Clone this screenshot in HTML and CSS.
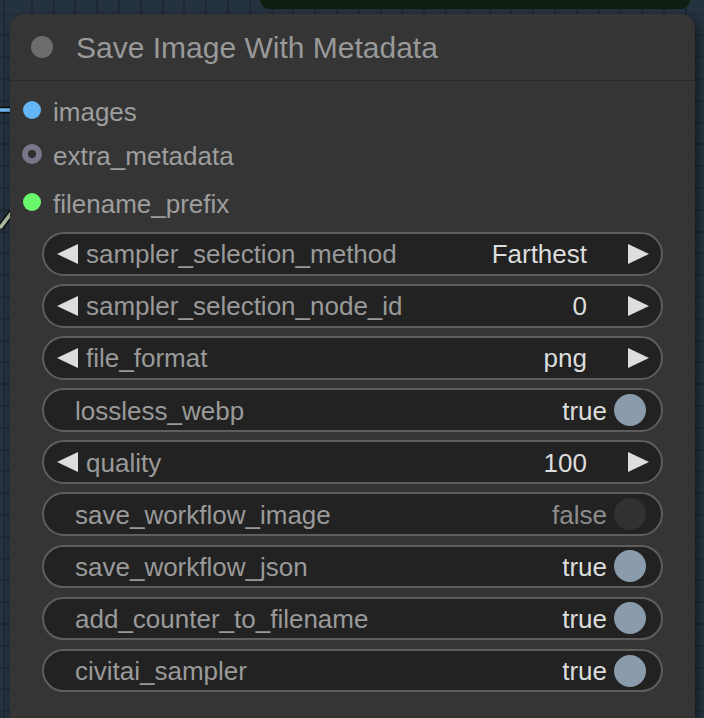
FILE: index.html
```html
<!DOCTYPE html>
<html>
<head>
<meta charset="utf-8">
<link rel="stylesheet" href="styles.css">
</head>
<body>
<div class="canvas">
  <svg class="links" width="12" height="240" viewBox="0 0 12 240">
    <line x1="0" y1="110" x2="12" y2="110" stroke="#111" stroke-width="7"/>
    <line x1="0" y1="110" x2="12" y2="110" stroke="#6cb8f4" stroke-width="3.5"/>
    <line x1="0" y1="228" x2="12" y2="212" stroke="#111" stroke-width="7"/>
    <line x1="0" y1="228" x2="12" y2="212" stroke="#a9b9a3" stroke-width="3.5"/>
  </svg>
  <div class="other-node"></div>
  <div class="node">
    <div class="title">
      <span class="title-dot"></span>
      <span class="title-text">Save Image With Metadata</span>
    </div>
    <div class="slots">
      <div class="slot"><span class="slot-pin"><span class="pin pin-blue"></span></span><span class="slot-label">images</span></div>
      <div class="slot"><span class="slot-pin"><span class="pin pin-ring"></span></span><span class="slot-label">extra_metadata</span></div>
      <div class="slot slot-last"><span class="slot-pin"><span class="pin pin-green"></span></span><span class="slot-label">filename_prefix</span></div>
    </div>
    <div class="widgets">
      <div class="widget">
        <svg class="arrow" width="21" height="20" viewBox="0 0 21 20"><polygon points="21,0 21,20 0,10" fill="#ddd"/></svg>
        <span class="w-label">sampler_selection_method</span>
        <span class="w-value">Farthest</span>
        <svg class="arrow arrow-r" width="21" height="20" viewBox="0 0 21 20"><polygon points="0,0 0,20 21,10" fill="#ddd"/></svg>
      </div>
      <div class="widget">
        <svg class="arrow" width="21" height="20" viewBox="0 0 21 20"><polygon points="21,0 21,20 0,10" fill="#ddd"/></svg>
        <span class="w-label">sampler_selection_node_id</span>
        <span class="w-value">0</span>
        <svg class="arrow arrow-r" width="21" height="20" viewBox="0 0 21 20"><polygon points="0,0 0,20 21,10" fill="#ddd"/></svg>
      </div>
      <div class="widget">
        <svg class="arrow" width="21" height="20" viewBox="0 0 21 20"><polygon points="21,0 21,20 0,10" fill="#ddd"/></svg>
        <span class="w-label">file_format</span>
        <span class="w-value">png</span>
        <svg class="arrow arrow-r" width="21" height="20" viewBox="0 0 21 20"><polygon points="0,0 0,20 21,10" fill="#ddd"/></svg>
      </div>
      <div class="widget toggle">
        <span class="w-label">lossless_webp</span>
        <span class="w-value">true</span>
        <span class="knob on"></span>
      </div>
      <div class="widget">
        <svg class="arrow" width="21" height="20" viewBox="0 0 21 20"><polygon points="21,0 21,20 0,10" fill="#ddd"/></svg>
        <span class="w-label">quality</span>
        <span class="w-value">100</span>
        <svg class="arrow arrow-r" width="21" height="20" viewBox="0 0 21 20"><polygon points="0,0 0,20 21,10" fill="#ddd"/></svg>
      </div>
      <div class="widget toggle">
        <span class="w-label">save_workflow_image</span>
        <span class="w-value off">false</span>
        <span class="knob"></span>
      </div>
      <div class="widget toggle">
        <span class="w-label">save_workflow_json</span>
        <span class="w-value">true</span>
        <span class="knob on"></span>
      </div>
      <div class="widget toggle">
        <span class="w-label">add_counter_to_filename</span>
        <span class="w-value">true</span>
        <span class="knob on"></span>
      </div>
      <div class="widget toggle">
        <span class="w-label">civitai_sampler</span>
        <span class="w-value">true</span>
        <span class="knob on"></span>
      </div>
    </div>
  </div>
</div>
</body>
</html>
```

FILE: styles.css
```css
html, body {
  margin: 0;
  padding: 0;
}
body {
  width: 704px;
  height: 718px;
  overflow: hidden;
  font-family: "Liberation Sans", Arial, sans-serif;
}
.canvas {
  position: relative;
  width: 704px;
  height: 718px;
  overflow: hidden;
  background-color: #25323f;
  background-image:
    repeating-linear-gradient(0deg, transparent 0px, transparent 19.8px, #1e2934 19.8px, #1e2934 21.8px),
    repeating-linear-gradient(90deg, transparent 0px, transparent 19.8px, #1e2934 19.8px, #1e2934 21.8px);
  background-position: 0 14px, 11px 0;
}
.links {
  position: absolute;
  left: 0;
  top: 0;
}
.other-node {
  position: absolute;
  left: 260px;
  top: -20px;
  width: 430px;
  height: 29px;
  background: #0e1f12;
  border-radius: 9px;
}
.node {
  position: absolute;
  left: 10px;
  top: 14px;
  width: 685px;
  height: 740px;
  background: #353535;
  border-radius: 14px;
  box-shadow: 3px 3px 8px rgba(0, 0, 0, 0.45);
}
.title {
  height: 66px;
  border-bottom: 1px solid #2a2a2a;
  display: flex;
  align-items: center;
  padding-left: 21px;
  gap: 23px;
}
.title-dot {
  width: 22px;
  height: 22px;
  border-radius: 50%;
  background: #6c6c6c;
  flex: none;
}
.title-text {
  font-size: 30px;
  color: #999;
  line-height: 1;
  padding-top: 2px;
}
.slots {
  padding-top: 7px;
}
.slot {
  height: 44px;
  display: flex;
  align-items: center;
  padding-left: 12px;
  gap: 11px;
}
.slot-last {
  margin-top: 4px;
}
.slot-pin {
  width: 20px;
  height: 20px;
  display: flex;
  align-items: center;
  justify-content: center;
  flex: none;
}
.pin {
  border-radius: 50%;
  display: block;
}
.pin-blue {
  width: 18px;
  height: 18px;
  background: #64b5f6;
}
.pin-green {
  width: 18px;
  height: 18px;
  background: #6bf76b;
}
.pin-ring {
  width: 20px;
  height: 20px;
  box-sizing: border-box;
  border: 6.5px solid #77768a;
  background: #2e2e2e;
}
.slot-label {
  font-size: 26px;
  color: #9e9e9e;
  line-height: 1;
  padding-top: 3px;
}
.widgets {
  margin-top: 8px;
  padding-left: 32px;
  display: flex;
  flex-direction: column;
  gap: 8.5px;
}
.widget {
  width: 621px;
  height: 43.6px;
  box-sizing: border-box;
  border: 2px solid #5e5e5e;
  border-radius: 22px;
  background: #222;
  display: flex;
  align-items: center;
  padding-left: 13px;
  padding-right: 12px;
  font-size: 26px;
  line-height: 1;
}
.arrow {
  flex: none;
  display: block;
}
.w-label {
  color: #9a9a9a;
  margin-left: 8px;
  flex: 1;
  white-space: nowrap;
  padding-top: 1px;
}
.w-value {
  color: #ddd;
  white-space: nowrap;
  padding-top: 1px;
}
.arrow-r {
  margin-left: 41px;
}
.toggle {
  padding-left: 31px;
  padding-right: 15px;
}
.toggle .w-label {
  margin-left: 0;
}
.w-value.off {
  color: #8c8c8c;
}
.knob {
  width: 32px;
  height: 32px;
  border-radius: 50%;
  background: #313131;
  margin-left: 7px;
  flex: none;
}
.knob.on {
  background: #8a9bac;
}
```
